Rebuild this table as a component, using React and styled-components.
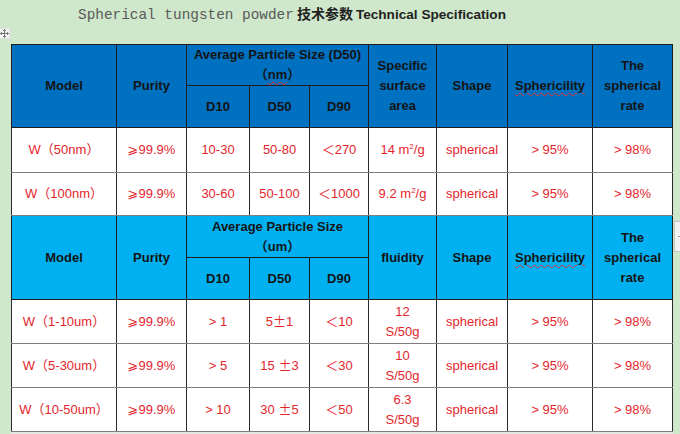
import React from 'react';
import styled, {createGlobalStyle} from 'styled-components';

const GlobalStyle = createGlobalStyle`
  html, body {
    margin: 0;
    padding: 0;
    background: #cfe7ca;
  }
  body {
    font-family: "Liberation Sans", Arial, sans-serif;
  }
`;

const nmRows = [
  {model: 'W（50nm）', purity: '⩾99.9%', d10: '10-30', d50: '50-80', d90: '＜270', area: ['14 m', '2', '/g']},
  {model: 'W（100nm）', purity: '⩾99.9%', d10: '30-60', d50: '50-100', d90: '＜1000', area: ['9.2 m', '2', '/g']},
];

const umRows = [
  {model: 'W（1-10um）', purity: '⩾99.9%', d10: '> 1', d50: ['5', '1'], d90: '＜10', flow: '12'},
  {model: 'W（5-30um）', purity: '⩾99.9%', d10: '> 5', d50: ['15 ', '3'], d90: '＜30', flow: '10'},
  {model: 'W（10-50um）', purity: '⩾99.9%', d10: '> 10', d50: ['30 ', '5'], d90: '＜50', flow: '6.3'},
];

const widths = [105, 70, 63, 60, 59, 68, 71, 85, 80];

export default function App() {
  return (
    <Page>
      <GlobalStyle/>
      <Title>
        <Mono>Spherical tungsten powder</Mono>
        <Cjk>技术参数</Cjk>
        <TitleSans>Technical Specification</TitleSans>
      </Title>

      <MoveHandle>
        <svg width="9" height="9" viewBox="0 0 9 9">
          <path d="M4.5 0.5v8M0.5 4.5h8M3 2l1.5-1.5L6 2M3 7l1.5 1.5L6 7M2 3L0.5 4.5 2 6M7 3l1.5 1.5L7 6"
                stroke="#777" strokeWidth="1" fill="none"/>
        </svg>
      </MoveHandle>

      <SideTab/>

      <Table>
        <colgroup>
          {widths.map((w, i) => <col key={i} style={{width: w}}/>)}
        </colgroup>
        <tbody>
          <tr>
            <Head $tone="dark" rowSpan={2}>Model</Head>
            <Head $tone="dark" rowSpan={2}>Purity</Head>
            <Head $tone="dark" colSpan={3} $h={40}>
              Average Particle Size (D50)<br/>（<Squiggle>nm</Squiggle>）
            </Head>
            <Head $tone="dark" rowSpan={2}>Specific<br/>surface<br/>area</Head>
            <Head $tone="dark" rowSpan={2}>Shape</Head>
            <Head $tone="dark" rowSpan={2}><Squiggle>Sphericility</Squiggle></Head>
            <Head $tone="dark" rowSpan={2}>The<br/>spherical<br/>rate</Head>
          </tr>
          <tr>
            <Head $tone="dark" $h={41}>D10</Head>
            <Head $tone="dark" $h={41}>D50</Head>
            <Head $tone="dark" $h={41}>D90</Head>
          </tr>

          {nmRows.map((r, i) => (
            <tr key={r.model}>
              <Cell $h={i === 0 ? 44 : 42}>{r.model}</Cell>
              <Cell>{r.purity}</Cell>
              <Cell>{r.d10}</Cell>
              <Cell>{r.d50}</Cell>
              <Cell>{r.d90}</Cell>
              <Cell>{r.area[0]}<sup>{r.area[1]}</sup>{r.area[2]}</Cell>
              <Cell>spherical</Cell>
              <Cell>&gt; 95%</Cell>
              <Cell>&gt; 98%</Cell>
            </tr>
          ))}

          <tr>
            <Head $tone="light" rowSpan={2}>Model</Head>
            <Head $tone="light" rowSpan={2}>Purity</Head>
            <Head $tone="light" colSpan={3} $h={41}>
              Average Particle Size<br/>（um）
            </Head>
            <Head $tone="light" rowSpan={2}>fluidity</Head>
            <Head $tone="light" rowSpan={2}>Shape</Head>
            <Head $tone="light" rowSpan={2}><Squiggle>Sphericility</Squiggle></Head>
            <Head $tone="light" rowSpan={2}>The<br/>spherical<br/>rate</Head>
          </tr>
          <tr>
            <Head $tone="light" $h={41}>D10</Head>
            <Head $tone="light" $h={41}>D50</Head>
            <Head $tone="light" $h={41}>D90</Head>
          </tr>

          {umRows.map(r => (
            <tr key={r.model}>
              <Cell $h={43}>{r.model}</Cell>
              <Cell>{r.purity}</Cell>
              <Cell>{r.d10}</Cell>
              <Cell>{r.d50[0]}<Wide>±</Wide>{r.d50[1]}</Cell>
              <Cell>{r.d90}</Cell>
              <Cell>{r.flow}<br/>S/50g</Cell>
              <Cell>spherical</Cell>
              <Cell>&gt; 95%</Cell>
              <Cell>&gt; 98%</Cell>
            </tr>
          ))}
        </tbody>
      </Table>
    </Page>
  );
}

const Page = styled.div`
  position: relative;
  width: 680px;
  height: 434px;
  overflow: hidden;
  padding: 44px 0 0 11px;
  box-sizing: border-box;
`;

const Title = styled.div`
  position: absolute;
  top: 4px;
  left: 78px;
  display: flex;
  align-items: baseline;
  gap: 3px;
  white-space: nowrap;
  line-height: 18px;
`;

const Mono = styled.span`
  font-family: "Liberation Mono", "DejaVu Sans Mono", monospace;
  font-size: 14.4px;
  color: #5a5a5a;
`;

const Cjk = styled.span`
  font-family: "Noto Sans CJK SC", sans-serif;
  font-weight: 700;
  font-size: 14px;
  color: #222;
`;

const TitleSans = styled.span`
  font-family: "Liberation Sans", Arial, sans-serif;
  font-weight: 700;
  font-size: 13.6px;
  color: #222;
`;

const MoveHandle = styled.div`
  position: absolute;
  left: 0;
  top: 28px;
  width: 10px;
  height: 11px;
  background: #f4f4f4;
  border: 1px solid #e0e0e0;
  border-left: none;
  box-sizing: border-box;
  display: flex;
  align-items: center;
  justify-content: center;
`;

const SideTab = styled.div`
  position: absolute;
  left: 674px;
  top: 221px;
  width: 8px;
  height: 31px;
  background: #f3f5f3;
  border: 1px solid #c4c4c4;
  box-sizing: border-box;

  &::after {
    content: '';
    position: absolute;
    left: 3px;
    top: 14px;
    width: 3px;
    height: 1px;
    background: #999;
  }
`;

const Table = styled.table`
  border-collapse: collapse;
  table-layout: fixed;
  width: 661px;
  border: 1px solid #1d1d1d;
  background: #fff;
  box-shadow: 0 2px 0 #e4e8e4;
`;

const Head = styled.td`
  height: ${p => (p.$h ? p.$h + 'px' : 'auto')};
  padding: 0;
  border: 1px solid #1d1d1d;
  background: ${p => (p.$tone === 'dark' ? '#0070c0' : '#00b0f0')};
  color: #141414;
  font-family: "Liberation Sans", Arial, "Noto Sans CJK SC", sans-serif;
  font-weight: 700;
  font-size: 13px;
  line-height: 20px;
  text-align: center;
  vertical-align: middle;
`;

const Cell = styled.td`
  height: ${p => (p.$h ? p.$h + 'px' : 'auto')};
  padding: 0;
  border: 1px solid #2a2a2a;
  border-top-color: #7d7d7d;
  border-bottom-color: #7d7d7d;
  color: #e3262c;
  font-family: "Liberation Sans", Arial, "DejaVu Sans", "Noto Sans CJK SC", sans-serif;
  font-size: 13px;
  line-height: 20px;
  text-align: center;
  vertical-align: middle;
  white-space: nowrap;

  sup {
    font-size: 8px;
    line-height: 0;
    vertical-align: 5px;
  }
`;

const Wide = styled.span`
  font-family: "Noto Sans CJK SC", sans-serif;
`;

const Squiggle = styled.span`
  text-decoration: underline wavy #e03030;
  text-decoration-thickness: 1px;
  text-underline-offset: 2px;
`;
